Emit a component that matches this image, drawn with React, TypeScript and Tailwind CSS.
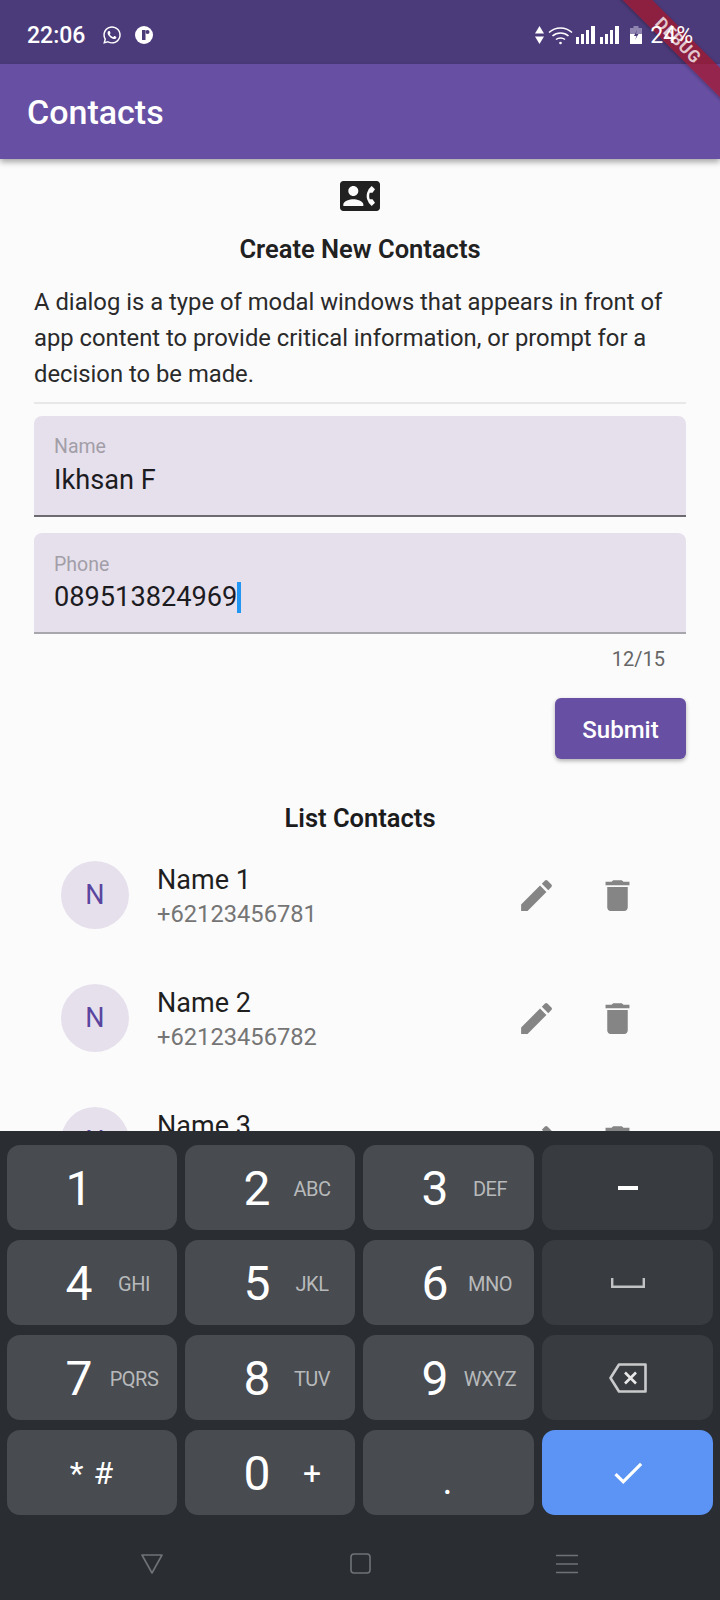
import React from "react";
import { FaWhatsapp } from "react-icons/fa";
import { MdContactPhone, MdEdit, MdDelete, MdCheck } from "react-icons/md";

function Bars() {
  return (
    <svg width="20" height="18" viewBox="0 0 20 18" fill="#fff">
      <rect x="0" y="11" width="3" height="7" />
      <rect x="5" y="8" width="3" height="10" />
      <rect x="10" y="4" width="3" height="14" />
      <rect x="15" y="0" width="4" height="18" />
    </svg>
  );
}

function StatusBar() {
  return (
    <div className="h-[64px] shrink-0 bg-[#4c3b7b] flex items-center pt-[6px] pl-[27px] pr-[27px] text-white">
      <span className="text-[23px] font-medium leading-none">22:06</span>
      <FaWhatsapp className="ml-[17px] text-[20px]" />
      <svg className="ml-[13px]" width="18" height="18" viewBox="0 0 18 18">
        <circle cx="9" cy="9" r="9" fill="#fff" />
        <rect x="7" y="4" width="3.5" height="10" fill="#4c3b7b" />
        <circle cx="12.5" cy="6" r="2" fill="#4c3b7b" />
      </svg>
      <svg className="ml-auto" width="9" height="18" viewBox="0 0 9 18" fill="#fff">
        <path d="M4.5 0 9 7.5H0z" />
        <path d="M0 10.5h9L4.5 18z" />
      </svg>
      <svg className="ml-[4px]" width="25" height="19" viewBox="0 0 25 19" fill="none" stroke="#fff" strokeWidth="1.6">
        <path d="M1 6.5C7.5 .5 17.5 .5 24 6.5" />
        <path d="M4.5 10C9 6 16 6 20.5 10" />
        <path d="M8 13.5C10.5 11.5 14.5 11.5 17 13.5" />
        <circle cx="12.5" cy="17" r="1.3" fill="#fff" stroke="none" />
      </svg>
      <span className="ml-[3px] flex gap-[4px]">
        <Bars />
        <Bars />
      </span>
      <svg className="ml-[10px]" width="12" height="18" viewBox="0 0 12 18">
        <rect x="3.5" y="0" width="5" height="2" fill="#8f85b0" />
        <rect x="0" y="2" width="12" height="6" fill="#8f85b0" />
        <rect x="0" y="8" width="12" height="10" fill="#fff" />
        <path d="M7 4 4 10h2.5L5 14l3.5-6H6z" fill="#4c3b7b" />
      </svg>
      <span className="relative z-30 ml-[8px] text-[23px] leading-none">24%</span>
    </div>
  );
}

function Field({ label, value, cursor, line, pad }: { label: string; value: string; cursor?: boolean; line: string; pad: string }) {
  return (
    <div className={`h-[101px] bg-[#e6e0ec] rounded-t-[8px] px-[20px] border-b-2 flex flex-col ${line}`}>
      <div className={`text-[19.5px] leading-[24px] text-[#a29ea8] ${pad}`}>{label}</div>
      <div className="flex items-center text-[27.2px] leading-[34px] text-[#1c1b1f]">
        <span>{value}</span>
        {cursor && <span className="w-[3.5px] h-[31px] bg-[#2196f3]" />}
      </div>
    </div>
  );
}

function ContactRow({ name, phone }: { name: string; phone: string }) {
  return (
    <div className="h-[123px] shrink-0 flex pt-[16px] pl-[27px]">
      <div className="w-[68px] h-[68px] rounded-full bg-[#e6e0ec] flex items-center justify-center text-[27px] text-[#5a46a0]">
        N
      </div>
      <div className="ml-[28px] w-[300px]">
        <div className="mt-[2px] text-[27px] leading-[34px] text-[#1f1f1f]">{name}</div>
        <div className="text-[23.7px] leading-[30px] mt-[2px] text-[#757575]">{phone}</div>
      </div>
      <div className="ml-[60px] flex gap-[42px] pt-[4px] text-[#858585] h-[64px] items-center">
        <MdEdit className="text-[41px] -mx-[1px]" />
        <MdDelete className="text-[41px] -mx-[1px]" />
      </div>
    </div>
  );
}

function Key({ d, l, kind = "num", children }: { d?: string; l?: string; kind?: string; children?: React.ReactNode }) {
  const bg = kind === "fn" ? "bg-[#383c40]" : kind === "go" ? "bg-[#5b94f5]" : "bg-[#484b4f]";
  return (
    <div className={`h-[85px] rounded-[13px] flex items-center text-white ${bg} ${d ? "" : "justify-center"}`}>
      {d ? (
        <>
          <span className="w-[40px] ml-[52px] mt-[3px] text-center text-[48px] leading-none">{d}</span>
          <span
            className={
              l === "+"
                ? "w-[70px] text-center text-[32px] leading-none text-white"
                : "w-[70px] mt-[2px] text-center text-[20px] text-[#b7b9bb] tracking-[-0.5px]"
            }
          >
            {l}
          </span>
        </>
      ) : (
        children
      )}
    </div>
  );
}

function Keyboard() {
  return (
    <div className="shrink-0 h-[469px] bg-[#2a2e32] pt-[14px] flex flex-col">
      <div className="grid grid-cols-[170px_170px_171px_171px] gap-x-[8px] gap-y-[10px] px-[7px]">
        <Key d="1" />
        <Key d="2" l="ABC" />
        <Key d="3" l="DEF" />
        <Key kind="fn"><span className="w-[20px] h-[4px] bg-white" /></Key>
        <Key d="4" l="GHI" />
        <Key d="5" l="JKL" />
        <Key d="6" l="MNO" />
        <Key kind="fn">
          <svg width="34" height="10" viewBox="0 0 34 10" fill="none" stroke="#c0c2c4" strokeWidth="2.4">
            <path d="M1.2 0v8.8h31.6V0" />
          </svg>
        </Key>
        <Key d="7" l="PQRS" />
        <Key d="8" l="TUV" />
        <Key d="9" l="WXYZ" />
        <Key kind="fn">
          <svg width="38" height="30" viewBox="0 0 38 30" fill="none" stroke="#c9cacc" strokeWidth="2.6" strokeLinejoin="round">
            <path d="M10 1.5h26.5v27H10L1.5 15z" />
            <path d="M16 9.5 27 20.5M27 9.5 16 20.5" stroke="#e8e8e8" strokeWidth="2.6" />
          </svg>
        </Key>
        <Key><span className="text-[32px] tracking-[1px] leading-none">* #</span></Key>
        <Key d="0" l="+" />
        <Key><span className="text-[38px] leading-none mt-[17px] mr-[2px]">.</span></Key>
        <Key kind="go"><MdCheck className="text-[38px]" /></Key>
      </div>
      <div className="flex-1 flex items-center justify-between pl-[140px] pr-[142px] pt-[12px]">
        <svg width="24" height="22" viewBox="0 0 24 22" fill="none" stroke="#6f7377" strokeWidth="1.6" strokeLinejoin="round">
          <path d="M2 2h20L12 20z" />
        </svg>
        <svg width="21" height="21" viewBox="0 0 21 21" fill="none" stroke="#6f7377" strokeWidth="1.6">
          <rect x="1" y="1" width="19" height="19" rx="3" />
        </svg>
        <svg width="22" height="20" viewBox="0 0 22 20" fill="none" stroke="#6f7377" strokeWidth="1.6">
          <path d="M0 1.5h22M0 10h22M0 18.5h22" />
        </svg>
      </div>
    </div>
  );
}

export default function App() {
  return (
    <div className="relative w-[720px] h-[1600px] overflow-hidden flex flex-col bg-[#fbfbfc] font-['Roboto',sans-serif]">
      <StatusBar />
      <div className="h-[95px] shrink-0 bg-[#674fa3] flex items-center pl-[27px] pt-[2px] text-white text-[34px] font-medium shadow-[0_3px_6px_rgba(0,0,0,0.35)] z-10">
        Contacts
      </div>
      <div className="flex-1 min-h-0 overflow-hidden px-[34px] pt-[17px] flex flex-col">
        <div className="flex justify-center text-[#212121]">
          <MdContactPhone className="text-[40px]" />
        </div>
        <div className="mt-[17px] text-center text-[25.5px] leading-[32px] font-semibold text-[#212121]">Create New Contacts</div>
        <p className="mt-[19px] text-[23.8px] leading-[36px] text-[#2a2a2a]">
          A dialog is a type of modal windows that appears in front of app content to provide critical information, or prompt for a decision to be made.
        </p>
        <div className="mt-[10px] h-[2px] shrink-0 bg-[#e8e8e8]" />
        <div className="mt-[12px]">
          <Field label="Name" value="Ikhsan F" pad="mt-[19px] mb-[4px]" line="border-[#6d6a72]" />
        </div>
        <div className="mt-[16px]">
          <Field label="Phone" value="089513824969" cursor pad="mt-[20px] mb-[3px]" line="border-[#a9a7ae]" />
        </div>
        <div className="mt-[12px] pr-[21px] text-right text-[20px] leading-[26px] text-[#666666]">12/15</div>
        <div className="mt-[26px] flex justify-end">
          <div className="w-[131px] h-[61px] pt-[2px] rounded-[6px] bg-[#674fa3] text-white text-[24px] font-medium flex items-center justify-center shadow-[0_2px_4px_rgba(0,0,0,0.3)]">
            Submit
          </div>
        </div>
        <div className="mt-[43px] text-center text-[25.5px] leading-[32px] font-semibold text-[#1c1c1c]">List Contacts</div>
        <div className="mt-[11px] flex flex-col">
          <ContactRow name="Name 1" phone="+62123456781" />
          <ContactRow name="Name 2" phone="+62123456782" />
          <ContactRow name="Name 3" phone="+62123456783" />
        </div>
      </div>
      <Keyboard />
      <div className="absolute left-[578px] top-[30px] w-[200px] h-[21px] rotate-45 bg-[rgba(170,20,40,0.7)] z-20 flex items-center justify-center text-[17px] font-bold leading-none tracking-[0.5px] text-[rgba(255,255,255,0.75)] shadow-[0_1px_4px_rgba(0,0,0,0.3)]">
        DEBUG
      </div>
    </div>
  );
}
